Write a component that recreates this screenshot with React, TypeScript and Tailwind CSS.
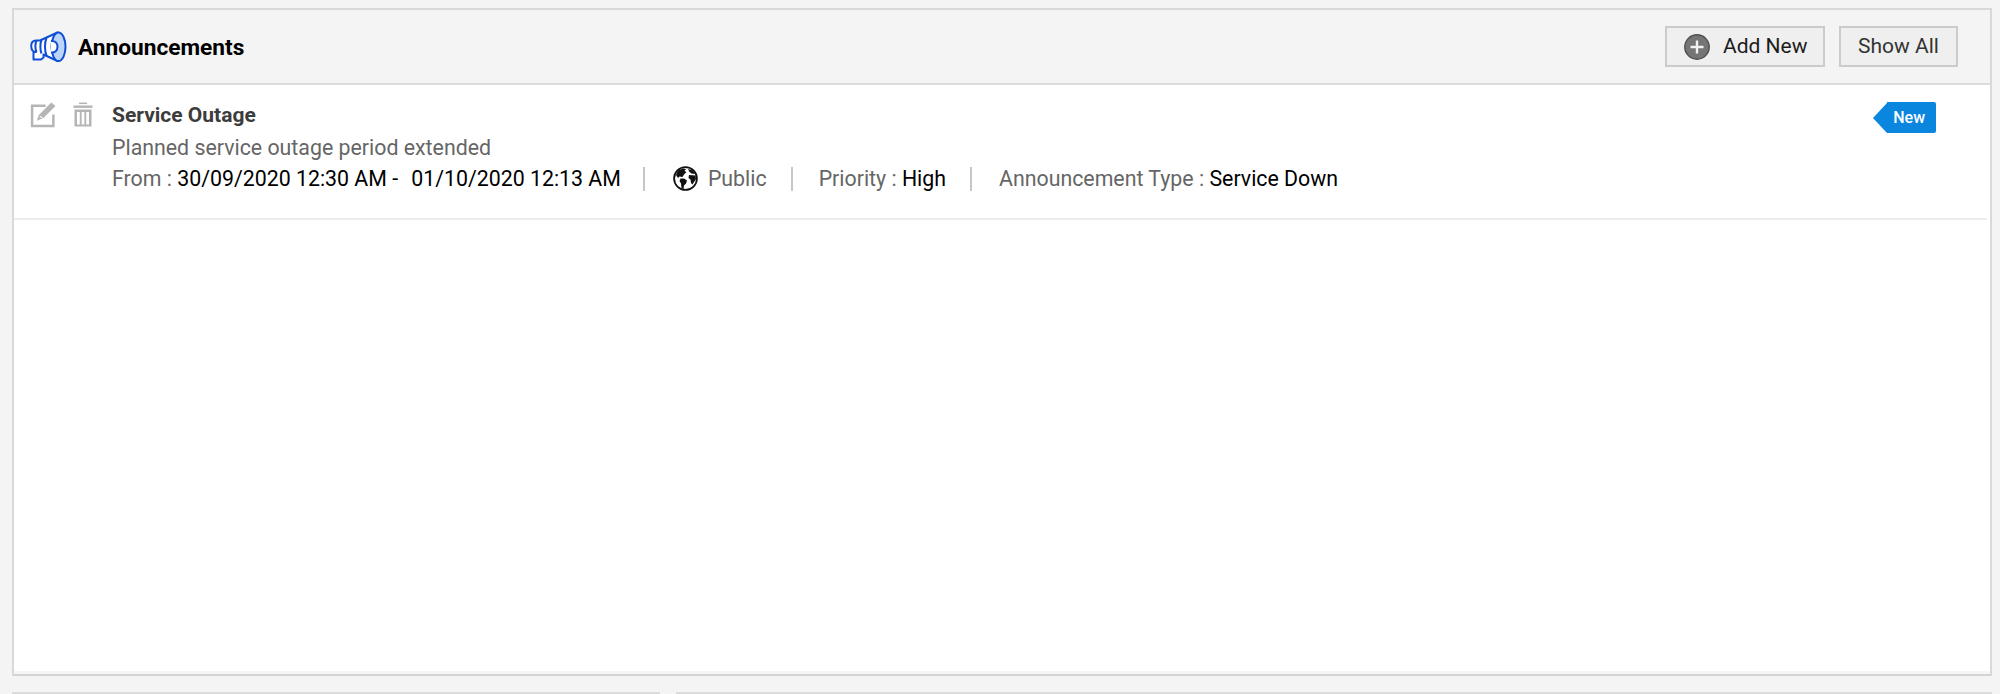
import React from "react";

function Megaphone() {
  return (
    <svg width="37" height="32" viewBox="0 0 37 32" fill="none" className="shrink-0">
      <path d="M27.5 1.5 L10 9.5 H6 C3 9.5 1.2 11.5 1.2 15 C1.2 18.5 3 21 6 21 H3.5 V28.5 H11 L13.5 26.5 V23.5 L27.5 30 Z" fill="#fff" stroke="#0f4fd6" strokeWidth="2" strokeLinejoin="round" />
      <ellipse cx="28.5" cy="15.8" rx="7" ry="14.3" fill="#bcd6fb" stroke="#0f4fd6" strokeWidth="2" />
      <path d="M6.5 9.5 C5 12.5 5 18 6.5 21 M11.5 9 C10 12.5 10 19 11.5 22.5 M16.5 7 C14.5 11.5 14.5 20 16.5 24.5" stroke="#0f4fd6" strokeWidth="2" />
      <path d="M21 10 C25 9.5 27.5 12 27.5 15.7 C27.5 19.5 25 22 21 21.5" fill="#fff" stroke="#0f4fd6" strokeWidth="2" />
    </svg>
  );
}

function EditIcon() {
  return (
    <svg width="26" height="26" viewBox="0 0 25 25" fill="none" className="shrink-0">
      <path d="M15 3.5 H2 V23 H22.5 V12" stroke="#b5b5b5" strokeWidth="2.4" />
      <path d="M20.5 0.5 L24.5 3.8 L13 15.5 L6.5 18 L8.5 12.5 Z" fill="#b5b5b5" />
      <path d="M9.5 13.5 L12 15.5" stroke="#fff" strokeWidth="1" />
    </svg>
  );
}

function TrashIcon() {
  return (
    <svg width="20" height="25" viewBox="0 0 20 25" className="shrink-0">
      <rect x="6" y="0.5" width="8" height="1.6" fill="#b5b5b5" />
      <rect x="0.5" y="3.5" width="19" height="2.4" fill="#b5b5b5" />
      <path d="M1.5 7.5 H18.5 V24.5 H1.5 Z M4 10 V22.4 H6.8 V10 Z M8.6 10 V22.4 H11.4 V10 Z M13.2 10 V22.4 H16 V10 Z" fill="#b5b5b5" fillRule="evenodd" />
    </svg>
  );
}

function PlusCircle() {
  return (
    <svg width="26" height="26" viewBox="0 0 26 26" className="shrink-0">
      <circle cx="13" cy="13" r="12.2" fill="#757575" stroke="#4f4f4f" strokeWidth="1.4" />
      <path d="M13 6.5 V19.5 M6.5 13 H19.5" stroke="#f2f2f2" strokeWidth="2.4" />
    </svg>
  );
}

function Globe() {
  return (
    <svg width="25" height="25" viewBox="0 0 25 25" className="mr-[10px] shrink-0">
      <circle cx="12.5" cy="12.5" r="11.4" fill="#fff" stroke="#111" strokeWidth="1.8" />
      <path d="M5 4.5 L10 2.5 L13 3 L11.5 5 L13.5 6 L11 8.5 L9.5 11 L6.5 10.5 L5 12 L3 9 Z" fill="#111" />
      <path d="M7.5 12.5 L11 12.5 L14 14.5 L13 17.5 L11 19.5 L10.5 23 L8.5 22 L8 17.5 L6.5 15 Z" fill="#111" />
      <path d="M15 3 L20 4.5 L22 8 L18.5 7.5 L16.5 6 Z M16 9 L22.5 9.5 L23 13 L21 16 L19.5 18.5 L18 17 L17.5 13.5 L15.5 12 Z" fill="#111" />
    </svg>
  );
}

export default function App() {
  return (
    <div className="h-[694px] overflow-hidden bg-[#f4f4f4] pt-2 pr-[8px] pl-3 font-['Roboto',sans-serif]">
      <section className="flex h-[668px] flex-col border-2 border-[#d9d9d9] border-b-[#d4d4d4] bg-white">
        <header className="flex h-[75px] shrink-0 items-center border-b-2 border-[#dcdcdc] bg-[#f4f4f4] pr-8 pl-4">
          <Megaphone />
          <h2 className="mt-[2px] ml-[11px] text-[22.67px] font-bold text-black">Announcements</h2>
          <div className="ml-auto flex gap-[14px]">
            <button className="flex h-[41px] w-[160px] items-center border-2 border-[#cbcbcb] bg-[#efefef] pl-[17px] text-[21px] text-[#1c1c1c]">
              <PlusCircle />
              <span className="ml-[13px]">Add New</span>
            </button>
            <button className="flex h-[41px] w-[119px] items-center justify-center border-2 border-[#cbcbcb] bg-[#efefef] text-[21px] text-[#333]">
              Show All
            </button>
          </div>
        </header>

        <article className="mr-[3px] flex h-[135px] shrink-0 border-b-2 border-[#ececec] pt-[17px] pl-4">
          <div className="flex h-6 w-[82px] shrink-0 items-start gap-[17px]">
            <EditIcon />
            <TrashIcon />
          </div>
          <div className="-mt-[1px] flex-1 text-[21.33px] leading-[31.5px] text-[#666]">
            <h3 className="-mt-[1px] text-[21px] font-bold text-[#3c3c3c]">Service Outage</h3>
            <p>Planned service outage period extended</p>
            <div className="flex items-center">
              <span>
                From : <span className="text-black">30/09/2020 12:30 AM -&nbsp; <span className="ml-[2.5px]">01/10/2020 12:13 AM</span></span>
              </span>
              <span className="mr-[28px] ml-[22px] h-6 w-0.5 bg-[#c6c6c6]" />
              <Globe />
              <span>Public</span>
              <span className="mr-[26px] ml-6 h-6 w-0.5 bg-[#c6c6c6]" />
              <span>
                Priority : <span className="text-black">High</span>
              </span>
              <span className="mr-[27px] ml-6 h-6 w-0.5 bg-[#c6c6c6]" />
              <span>
                Announcement Type : <span className="text-black">Service Down</span>
              </span>
            </div>
          </div>
          <div className="mr-[51px] flex h-[31px] items-center self-start">
            <span className="h-0 w-0 border-y-[15.5px] border-r-[14px] border-y-transparent border-r-[#0b86df]" />
            <span className="flex h-[31px] items-center rounded-r-[2px] bg-[#0b86df] pr-[11px] pl-[6px] text-[16px] font-medium text-white">
              New
            </span>
          </div>
        </article>

        <div className="flex-1" />
        <div className="h-[3px] shrink-0 bg-[#f5f5f5]" />
      </section>

      <div className="mt-4 flex gap-4">
        <div className="h-8 w-[648px] border-2 border-[#dcdcdc] bg-white" />
        <div className="h-8 flex-1 border-2 border-[#dcdcdc] bg-white" />
      </div>
    </div>
  );
}
